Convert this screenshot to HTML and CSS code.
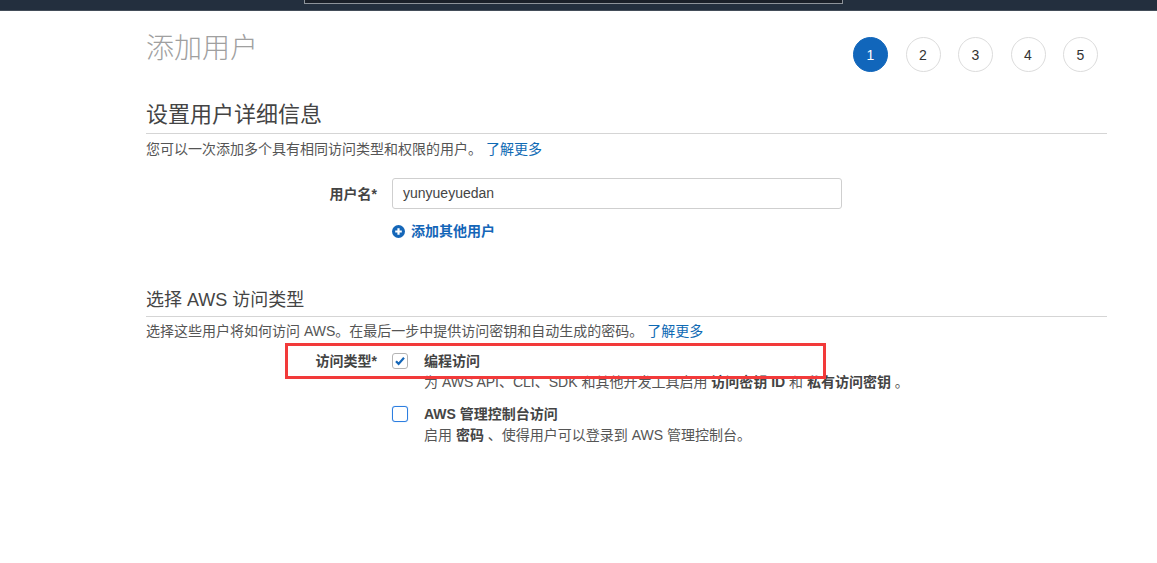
FILE: index.html
```html
<!DOCTYPE html>
<html lang="zh">
<head>
<meta charset="utf-8">
<title>添加用户</title>
<link rel="stylesheet" href="styles.css">
</head>
<body>
<div class="topbar"><div class="search"></div></div>
<main class="page">
  <div class="header">
    <h1 class="title">添加用户</h1>
    <ol class="steps">
      <li class="step active">1</li>
      <li class="step">2</li>
      <li class="step">3</li>
      <li class="step">4</li>
      <li class="step">5</li>
    </ol>
  </div>

  <section class="sec1">
    <h2 class="h2">设置用户详细信息</h2>
    <p class="desc">您可以一次添加多个具有相同访问类型和权限的用户。 <a class="link" href="#">了解更多</a></p>
    <div class="row username">
      <label class="label">用户名*</label>
      <div class="field"><div class="input">yunyueyuedan</div></div>
    </div>
    <div class="row addrow">
      <div class="label"></div>
      <a class="add" href="#"><svg width="13" height="13" viewBox="0 0 13 13"><circle cx="6.5" cy="6.5" r="6.5" fill="#1466b8"/><path d="M6.5 3.2v6.6M3.2 6.5h6.6" stroke="#fff" stroke-width="2.2"/></svg>添加其他用户</a>
    </div>
  </section>

  <section class="sec2">
    <h3 class="h3">选择 AWS 访问类型</h3>
    <p class="desc d2">选择这些用户将如何访问 AWS。在最后一步中提供访问密钥和自动生成的密码。 <a class="link" href="#">了解更多</a></p>
    <div class="row access">
      <label class="label">访问类型*</label>
      <div class="options">
        <div class="opt">
          <span class="cb checked"><svg width="12" height="12" viewBox="0 0 12 12"><path d="M2 6.3l2.6 2.6L10 2.8" fill="none" stroke="#1466b8" stroke-width="2.2"/></svg></span>
          <div class="opttext">
            <div class="optname">编程访问</div>
            <div class="optdesc">为 AWS API、CLI、SDK 和其他开发工具启用 <b>访问密钥 ID</b> 和 <b>私有访问密钥</b> 。</div>
          </div>
        </div>
        <div class="opt opt2">
          <span class="cb focus"></span>
          <div class="opttext">
            <div class="optname">AWS 管理控制台访问</div>
            <div class="optdesc">启用 <b>密码</b> 、使得用户可以登录到 AWS 管理控制台。</div>
          </div>
        </div>
      </div>
    </div>
  </section>
</main>
<div class="highlight"></div>
</body>
</html>
```
FILE: styles.css
```css
html, body {
  margin: 0;
  padding: 0;
  background: #fff;
}
body {
  font-family: "Liberation Sans", "Noto Sans CJK SC", sans-serif;
  color: #444;
  font-size: 14px;
  position: relative;
  width: 1157px;
  height: 563px;
  overflow: hidden;
}
.topbar {
  height: 10px;
  background: #232f3e;
  border-bottom: 1px solid #434d59;
  display: flex;
  padding-left: 304px;
}
.search {
  width: 537px;
  height: 3px;
  background: #1a2029;
  border: 1px solid #8d939a;
  border-top: none;
}
.page {
  margin-left: 146px;
  width: 961px;
}
.header {
  display: flex;
  justify-content: space-between;
  align-items: flex-start;
}
.title {
  margin: 22px 0 0 0;
  font-size: 28px;
  line-height: 32px;
  font-weight: 300;
  color: #a0a0a0;
}
.steps {
  list-style: none;
  margin: 26px 9px 0 0;
  padding: 0;
  display: flex;
  gap: 17.5px;
}
.step {
  width: 33px;
  height: 33px;
  border: 1px solid #dcdcdc;
  border-radius: 50%;
  display: flex;
  align-items: center;
  justify-content: center;
  font-size: 14px;
  color: #333;
}
.step.active {
  background: #1166bb;
  border-color: #1166bb;
  color: #fff;
}
.sec1 {
  margin-top: 29px;
}
.h2 {
  margin: 0;
  font-size: 22px;
  line-height: 28px;
  font-weight: normal;
  color: #444;
  padding-bottom: 4px;
  border-bottom: 1px solid #d5d5d5;
}
.desc {
  margin: 5px 0 0 0;
  font-size: 14px;
  line-height: 20px;
  color: #555;
}
.link {
  color: #0f6ab4;
  text-decoration: none;
}
.row {
  display: flex;
  align-items: center;
  gap: 15px;
}
.label {
  width: 231px;
  flex: none;
  text-align: right;
  font-weight: bold;
  color: #444;
  font-size: 14px;
  line-height: 20px;
}
.username {
  margin-top: 19px;
}
.input {
  width: 438px;
  height: 29px;
  border: 1px solid #cfcfcf;
  border-radius: 3px;
  padding-left: 10px;
  line-height: 29px;
  font-size: 14px;
  color: #444;
}
.addrow {
  margin-top: 12px;
}
.add {
  display: flex;
  align-items: center;
  gap: 6px;
  color: #1466b8;
  font-weight: bold;
  text-decoration: none;
  line-height: 20px;
}
.sec2 {
  margin-top: 47px;
}
.h3 {
  margin: 0;
  font-size: 18px;
  line-height: 24px;
  font-weight: normal;
  color: #444;
  padding-bottom: 4px;
  border-bottom: 1px solid #d5d5d5;
}
.d2 {
  margin-top: 4px;
}
.access {
  margin-top: 10px;
  align-items: flex-start;
}
.options {
  display: flex;
  flex-direction: column;
  gap: 11px;
}
.opt {
  display: flex;
  gap: 16px;
  align-items: flex-start;
}
.cb {
  width: 14px;
  height: 14px;
  margin-top: 2px;
  border: 1px solid #b4b4b4;
  border-radius: 3px;
  display: flex;
  align-items: center;
  justify-content: center;
  background: #fff;
}
.cb.focus {
  border-color: #2d7ee0;
  box-shadow: 0 0 1px #7fb2ee;
}
.optname {
  font-weight: bold;
  line-height: 20px;
  color: #444;
}
.optdesc {
  line-height: 22px;
  color: #555;
}
.optdesc b {
  color: #444;
}
.highlight {
  position: absolute;
  left: 285px;
  top: 343px;
  width: 535px;
  height: 30px;
  border: 3px solid #f23a3a;
}
```
